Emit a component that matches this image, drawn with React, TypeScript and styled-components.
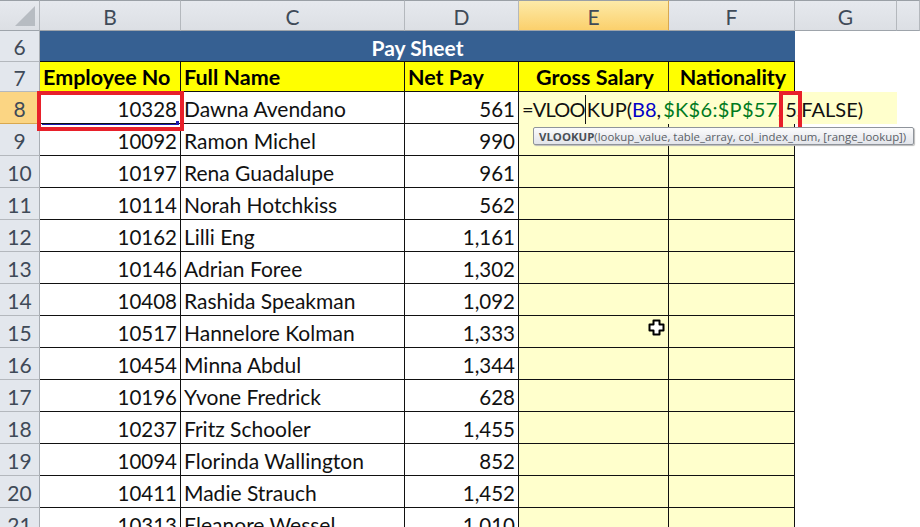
import React from 'react';
import styled, { createGlobalStyle } from 'styled-components';

const GlobalStyle = createGlobalStyle`
  html, body {
    margin: 0;
    padding: 0;
    background: #fff;
    overflow: hidden;
  }
`;

const Sheet = styled.div`
  position: relative;
  width: 920px;
  height: 527px;
  overflow: hidden;
  display: grid;
  grid-template-columns: 40px 141px 224px 114px 150px 126px 102px 23px;
  grid-template-rows: 31px 31px 30px 32px repeat(13, 32px) 32px;
  font-family: 'Lato', 'Liberation Sans', sans-serif;
  font-size: 21px;
  color: #111;
`;

const ColHead = styled.div<{ $active?: boolean }>`
  box-sizing: border-box;
  display: flex;
  align-items: center;
  justify-content: center;
  padding-top: 2px;
  color: #3f4a58;
  background: ${(p) =>
    p.$active ? 'linear-gradient(#fdeaa8, #fbd06c)' : 'linear-gradient(#e6e9ee, #dcdfe4)'};
  border-top: 1px solid #9aa0a6;
  border-right: 1px solid ${(p) => (p.$active ? '#d9a84e' : '#b4b8bd')};
  border-bottom: 1px solid #9ea4ab;
`;

const Corner = styled(ColHead)`
  position: relative;
  &::after {
    content: '';
    position: absolute;
    right: 4px;
    bottom: 4px;
    border-style: solid;
    border-width: 0 0 20px 20px;
    border-color: transparent transparent #b7bcc2 transparent;
  }
`;

const RowHead = styled.div<{ $active?: boolean }>`
  box-sizing: border-box;
  display: flex;
  align-items: center;
  justify-content: center;
  padding-top: 1px;
  color: #3f4a58;
  background: ${(p) => (p.$active ? '#fbd583' : '#e3e7ed')};
  border-right: 1px solid #a9aeb4;
  border-bottom: 1px solid ${(p) => (p.$active ? '#d9a84e' : '#b4b8bd')};
`;

const Title = styled.div`
  grid-column: 2 / 7;
  box-sizing: border-box;
  display: flex;
  align-items: center;
  justify-content: center;
  padding-top: 2px;
  background: #366092;
  color: #fff;
  font-weight: 700;
  font-size: 21px;
  border-bottom: 1px solid #111;
`;

const HeadCell = styled.div<{ $center?: boolean }>`
  box-sizing: border-box;
  display: flex;
  align-items: center;
  justify-content: ${(p) => (p.$center ? 'center' : 'flex-start')};
  padding-left: 3px;
  padding-top: 1px;
  background: #ffff00;
  color: #000;
  font-weight: 700;
  font-size: 21.5px;
  white-space: nowrap;
  border-right: 1.5px solid #111;
  border-bottom: 1.5px solid #111;
`;

const Cell = styled.div<{ $right?: boolean; $pale?: boolean }>`
  box-sizing: border-box;
  display: flex;
  align-items: center;
  justify-content: ${(p) => (p.$right ? 'flex-end' : 'flex-start')};
  padding: 2px 3px 0;
  font-size: ${(p) => (p.$right ? '20.5px' : '21px')};
  background: ${(p) => (p.$pale ? '#ffffcc' : '#fff')};
  white-space: nowrap;
  border-right: 1.5px solid #111;
  border-bottom: 1.5px solid #111;
`;

const FormulaCell = styled.div`
  grid-column: 5 / 8;
  box-sizing: border-box;
  display: flex;
  align-items: center;
  padding: 2px 0 0 3px;
  background: #ffffcc;
  white-space: pre;
  font-size: 20px;
`;

const FormulaHead = styled.span`
  letter-spacing: -0.8px;
`;

const FormulaIndex = styled.span`
  margin-left: 3px;
`;

const Caret = styled.span`
  display: inline-block;
  width: 1px;
  height: 29px;
  margin: 0 0.5px;
  background: #111;
`;

const RefB = styled.span`
  color: #0000c8;
`;

const RefG = styled.span`
  margin-left: 2px;
  letter-spacing: 0.3px;
  color: #007a1e;
`;

const Filler = styled.div``;

const RedBox = styled.div<{ $x: number; $y: number; $w: number; $h: number }>`
  position: absolute;
  left: ${(p) => p.$x}px;
  top: ${(p) => p.$y}px;
  width: ${(p) => p.$w}px;
  height: ${(p) => p.$h}px;
  box-sizing: border-box;
  border: 4px solid #e8202a;
`;

const SelectLine = styled.div`
  position: absolute;
  left: 42px;
  top: 124px;
  width: 137px;
  height: 1px;
  background: #1a1ab0;
  &::after {
    content: '';
    position: absolute;
    right: 0;
    bottom: 0;
    width: 3px;
    height: 4px;
    background: #1a1ab0;
  }
`;

const Tooltip = styled.div`
  position: absolute;
  left: 533px;
  top: 127px;
  width: 381px;
  height: 18px;
  box-sizing: border-box;
  display: flex;
  align-items: center;
  padding-left: 5px;
  white-space: nowrap;
  font-family: 'Open Sans', 'Liberation Sans', sans-serif;
  font-size: 11.4px;
  color: #5a5f66;
  background: linear-gradient(#fbfbfc, #e2e4ea);
  border: 1px solid #8f949b;
  border-radius: 2px;
  box-shadow: 1px 1px 1px #bbb;
  b {
    color: #4a4f56;
  }
`;

const CrossCursor = styled.svg`
  position: absolute;
  left: 648px;
  top: 319px;
`;

const rows: [number, string, string, string][] = [
  [9, '10092', 'Ramon Michel', '990'],
  [10, '10197', 'Rena Guadalupe', '961'],
  [11, '10114', 'Norah Hotchkiss', '562'],
  [12, '10162', 'Lilli Eng', '1,161'],
  [13, '10146', 'Adrian Foree', '1,302'],
  [14, '10408', 'Rashida Speakman', '1,092'],
  [15, '10517', 'Hannelore Kolman', '1,333'],
  [16, '10454', 'Minna Abdul', '1,344'],
  [17, '10196', 'Yvone Fredrick', '628'],
  [18, '10237', 'Fritz Schooler', '1,455'],
  [19, '10094', 'Florinda Wallington', '852'],
  [20, '10411', 'Madie Strauch', '1,452'],
  [21, '10313', 'Eleanore Wessel', '1,010'],
];

export default function App() {
  return (
    <Sheet>
      <GlobalStyle />
      <Corner />
      <ColHead>B</ColHead>
      <ColHead>C</ColHead>
      <ColHead>D</ColHead>
      <ColHead $active>E</ColHead>
      <ColHead>F</ColHead>
      <ColHead>G</ColHead>
      <ColHead />

      <RowHead>6</RowHead>
      <Title>Pay Sheet</Title>
      <Filler />
      <Filler />

      <RowHead>7</RowHead>
      <HeadCell>Employee No</HeadCell>
      <HeadCell>Full Name</HeadCell>
      <HeadCell>Net Pay</HeadCell>
      <HeadCell $center>Gross Salary</HeadCell>
      <HeadCell $center>Nationality</HeadCell>
      <Filler />
      <Filler />

      <RowHead $active>8</RowHead>
      <Cell $right>10328</Cell>
      <Cell>Dawna Avendano</Cell>
      <Cell $right>561</Cell>
      <FormulaCell>
        <FormulaHead>=VLOO</FormulaHead>
        <Caret />
        KUP(<RefB>B8</RefB>,<RefG>$K$6:$P$57</RefG>,<FormulaIndex>5</FormulaIndex>,FALSE)
      </FormulaCell>
      <Filler />

      {rows.map(([n, id, name, pay]) => (
        <React.Fragment key={n}>
          <RowHead>{n}</RowHead>
          <Cell $right>{id}</Cell>
          <Cell>{name}</Cell>
          <Cell $right>{pay}</Cell>
          <Cell $pale />
          <Cell $pale />
          <Filler />
          <Filler />
        </React.Fragment>
      ))}

      <RedBox $x={37} $y={91} $w={147} $h={40} />
      <SelectLine />
      <RedBox $x={779} $y={91} $w={23} $h={40} />
      <Tooltip>
        <b>VLOOKUP</b>(lookup_value, table_array, col_index_num, [range_lookup])
      </Tooltip>
      <CrossCursor width="17" height="17" viewBox="0 0 17 17">
        <path
          d="M5.5 1.5h6v4h4v6h-4v4h-6v-4h-4v-6h4z"
          fill="#fff"
          stroke="#000"
          strokeWidth="2"
          strokeLinejoin="round"
        />
      </CrossCursor>
    </Sheet>
  );
}
